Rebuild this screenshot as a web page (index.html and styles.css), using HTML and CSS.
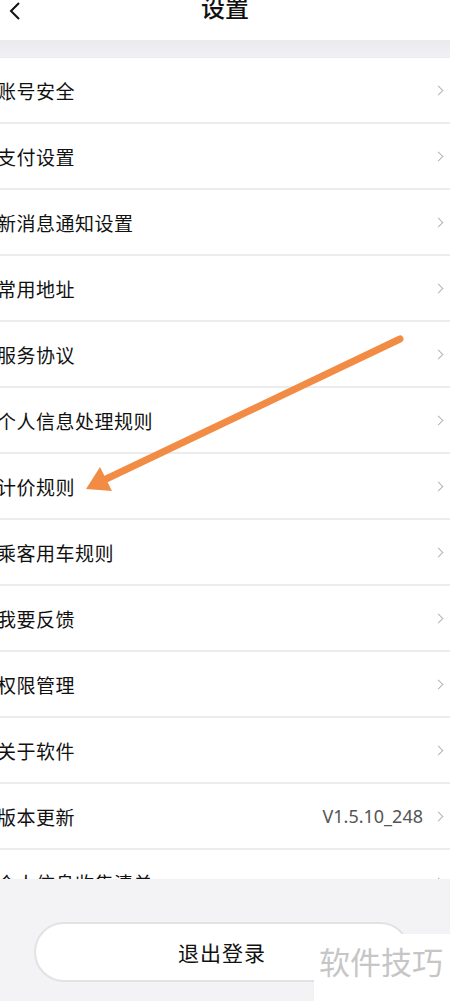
FILE: index.html
```html
<!DOCTYPE html>
<html lang="zh-CN">
<head>
  <meta charset="UTF-8">
  <title>设置</title>
  <link rel="stylesheet" href="styles.css">
</head>
<body>

  <div class="page">
    <header class="topbar">
      <span class="back">
        <svg width="12" height="18" viewBox="0 0 12 18"><path d="M10 1 L2 9 L10 17" fill="none" stroke="#111" stroke-width="2"/></svg>
      </span>
      <h1 class="title">设置</h1>
    </header>

    <div class="band"></div>

    <ul class="menu">
      <li class="row"><span class="label">账号安全</span><span class="arrow"></span></li>
      <li class="row"><span class="label">支付设置</span><span class="arrow"></span></li>
      <li class="row"><span class="label">新消息通知设置</span><span class="arrow"></span></li>
      <li class="row"><span class="label">常用地址</span><span class="arrow"></span></li>
      <li class="row"><span class="label">服务协议</span><span class="arrow"></span></li>
      <li class="row"><span class="label">个人信息处理规则</span><span class="arrow"></span></li>
      <li class="row"><span class="label">计价规则</span><span class="arrow"></span></li>
      <li class="row"><span class="label">乘客用车规则</span><span class="arrow"></span></li>
      <li class="row"><span class="label">我要反馈</span><span class="arrow"></span></li>
      <li class="row"><span class="label">权限管理</span><span class="arrow"></span></li>
      <li class="row"><span class="label">关于软件</span><span class="arrow"></span></li>
      <li class="row"><span class="label">版本更新</span><span class="value">V1.5.10_248</span><span class="arrow"></span></li>
      <li class="row"><span class="label">个人信息收集清单</span><span class="arrow"></span></li>
    </ul>

    <div class="footer">
      <button class="logout">退出登录</button>
    </div>

    <!-- orange pointer drawn over the screenshot -->
    <svg class="pointer" width="450" height="1001" viewBox="0 0 450 1001">
      <line x1="400" y1="339" x2="104" y2="480" stroke="#f28c45" stroke-width="7" stroke-linecap="round"/>
      <polygon points="86,489 100,467 112,491" fill="#f28c45"/>
    </svg>

    <div class="watermark">软件技巧</div>
  </div>

</body>
</html>
```

FILE: styles.css
```css
* {
  box-sizing: border-box;
}

body {
  margin: 0;
  background-color: #f3f3f6;
  font-family: "Noto Sans CJK SC", "Noto Sans", sans-serif;
  color: #111;
}

.page {
  position: relative;
  width: 450px;
  height: 1001px;
  overflow: hidden;
}

.topbar {
  display: flex;
  align-items: flex-start;
  justify-content: center;
  height: 40px;
  background-color: #fff;
}

.back {
  position: absolute;
  left: 9px;
  top: 1px;
}

.title {
  margin: -8px 0 0;
  font-size: 24px;
  font-weight: 500;
  line-height: 30px;
}

.band {
  height: 18px;
  background: linear-gradient(#e9e9ee, #f1f1f5);
  border-bottom: 1px solid #ececf0;
}

.menu {
  list-style: none;
  margin: 0;
  padding: 0;
  height: 821px;
  overflow: hidden;
  background-color: #fff;
}

.row {
  display: flex;
  align-items: center;
  height: 66px;
  padding-right: 8px;
  border-bottom: 2px solid #ececec;
}

.label {
  flex: 1;
  margin-left: -3px;
  font-size: 19px;
  letter-spacing: 0.5px;
}

.value {
  margin-right: 12px;
  font-family: "Noto Sans", sans-serif;
  font-size: 18px;
  color: #555;
}

.arrow {
  width: 7px;
  height: 7px;
  border-top: 1.5px solid #b4b4b4;
  border-right: 1.5px solid #b4b4b4;
  transform: rotate(45deg);
}

.footer {
  padding: 43px 40px 0 34px;
}

.logout {
  display: block;
  width: 100%;
  height: 60px;
  border: 2px solid #e2e2e2;
  border-radius: 30px;
  background-color: #fff;
  font-family: "Noto Sans CJK SC", sans-serif;
  font-size: 21px;
  letter-spacing: 1px;
  color: #111;
}

.pointer {
  position: absolute;
  left: 0;
  top: 0;
}

.watermark {
  position: absolute;
  right: 0;
  bottom: 0;
  width: 136px;
  height: 67px;
  padding: 7px 0 0 5px;
  background-color: #fff;
  font-size: 31px;
  line-height: 40px;
  color: #c6c6c6;
}
```
